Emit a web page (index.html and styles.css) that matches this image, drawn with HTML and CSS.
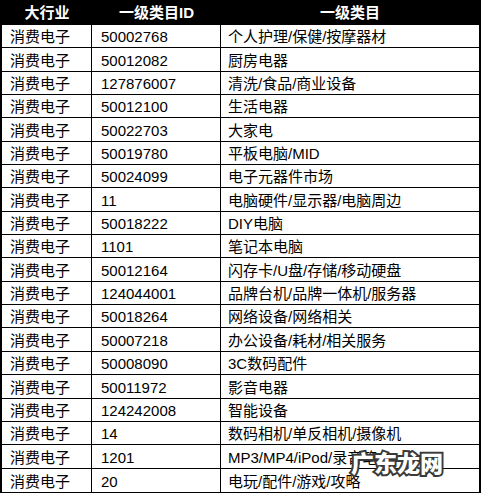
FILE: index.html
```html
<!DOCTYPE html>
<html lang="zh-CN">
<head>
<meta charset="utf-8">
<title>类目表</title>
<link rel="stylesheet" href="styles.css">
</head>
<body>
<div class="wrap">
<table class="cat">
<thead>
<tr><th class="c1">大行业</th><th class="c2">一级类目ID</th><th class="c3">一级类目</th></tr>
</thead>
<tbody>
<tr><td>消费电子</td><td>50002768</td><td>个人护理/保健/按摩器材</td></tr>
<tr><td>消费电子</td><td>50012082</td><td>厨房电器</td></tr>
<tr><td>消费电子</td><td>127876007</td><td>清洗/食品/商业设备</td></tr>
<tr><td>消费电子</td><td>50012100</td><td>生活电器</td></tr>
<tr><td>消费电子</td><td>50022703</td><td>大家电</td></tr>
<tr><td>消费电子</td><td>50019780</td><td>平板电脑/MID</td></tr>
<tr><td>消费电子</td><td>50024099</td><td>电子元器件市场</td></tr>
<tr><td>消费电子</td><td>11</td><td>电脑硬件/显示器/电脑周边</td></tr>
<tr><td>消费电子</td><td>50018222</td><td>DIY电脑</td></tr>
<tr><td>消费电子</td><td>1101</td><td>笔记本电脑</td></tr>
<tr><td>消费电子</td><td>50012164</td><td>闪存卡/U盘/存储/移动硬盘</td></tr>
<tr><td>消费电子</td><td>124044001</td><td>品牌台机/品牌一体机/服务器</td></tr>
<tr><td>消费电子</td><td>50018264</td><td>网络设备/网络相关</td></tr>
<tr><td>消费电子</td><td>50007218</td><td>办公设备/耗材/相关服务</td></tr>
<tr><td>消费电子</td><td>50008090</td><td>3C数码配件</td></tr>
<tr><td>消费电子</td><td>50011972</td><td>影音电器</td></tr>
<tr><td>消费电子</td><td>124242008</td><td>智能设备</td></tr>
<tr><td>消费电子</td><td>14</td><td>数码相机/单反相机/摄像机</td></tr>
<tr><td>消费电子</td><td>1201</td><td>MP3/MP4/iPod/录音笔</td></tr>
<tr><td>消费电子</td><td>20</td><td>电玩/配件/游戏/攻略</td></tr>
</tbody>
</table>
<span class="watermark">广东龙网</span>
</div>
</body>
</html>
```
FILE: styles.css
```css
html, body {
  margin: 0;
  padding: 0;
  background: #fff;
}
.wrap {
  position: relative;
  width: 482px;
  height: 493px;
  overflow: hidden;
}
.cat {
  border-collapse: separate;
  border-spacing: 0;
  width: 481px;
  table-layout: fixed;
  border-left: 2px solid #000;
  border-right: 2px solid #000;
  border-bottom: 2px solid #000;
  font-family: "Liberation Sans", "Noto Sans CJK SC", sans-serif;
  font-size: 15px;
  color: #000;
}
.cat th {
  background: #000;
  color: #fff;
  font-weight: bold;
  height: 25px;
  padding: 1px 0 0 0;
  box-sizing: border-box;
  text-align: center;
  line-height: 20px;
  vertical-align: middle;
}
.cat .c1 { width: 90px; }
.cat .c2 { width: 129px; }
.cat td {
  height: 23.35px;
  box-sizing: border-box;
  padding: 0 4px 1px 8px;
  line-height: 19px;
  vertical-align: bottom;
  border-right: 1px solid #000;
  border-bottom: 1px solid #000;
  white-space: nowrap;
  overflow: hidden;
}
.cat td:last-child { border-right: 0; }
.cat tbody tr:last-child td { border-bottom: 0; }
.cat td:first-child { padding-left: 8px; }
.cat td:nth-child(2) { padding-left: 9px; }
.cat td:nth-child(3) { padding-left: 7px; }
.watermark {
  position: absolute;
  left: 351px;
  top: 447px;
  font-family: "Noto Sans CJK SC", sans-serif;
  font-weight: 900;
  font-size: 23px;
  letter-spacing: 0px;
  color: #fff;
  -webkit-text-stroke: 4px #3a3a3a;
  paint-order: stroke fill;
  line-height: 30px;
}
```
